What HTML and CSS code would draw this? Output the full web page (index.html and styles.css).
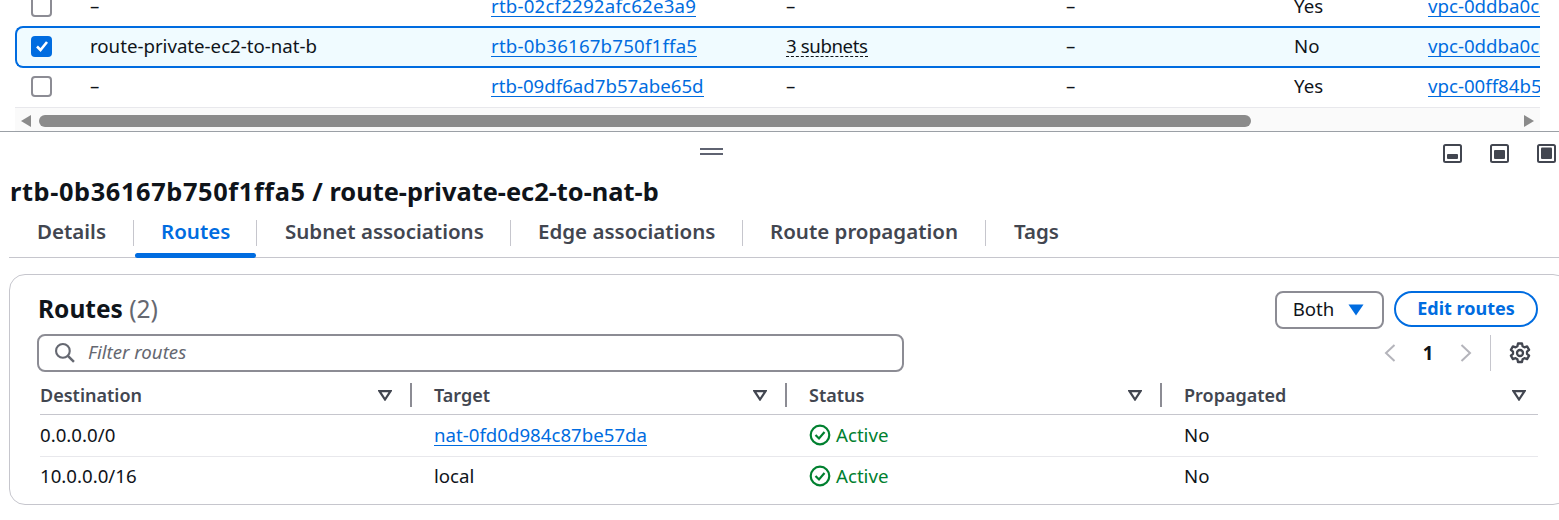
FILE: index.html
```html
<!DOCTYPE html>
<html lang="en">
<head>
    <meta charset="UTF-8">
    <title>Route tables</title>
    <link rel="stylesheet" href="styles.css">
</head>
<body>

    <section class="top-table">
        <div class="top-rows">
            <div class="top-row first">
                <span class="check"></span>
                <span>–</span>
                <span><a class="wide-id" href="#">rtb-02cf2292afc62e3a9</a></span>
                <span>–</span>
                <span>–</span>
                <span>Yes</span>
                <span class="clip"><a href="#">vpc-0ddba0c0e1f2</a></span>
            </div>
            <div class="top-row selected">
                <span class="check on">
                    <svg viewBox="0 0 20 20" width="20" height="20"><path d="M5 10.500 8.500 14 15 6" fill="none" stroke="#fff" stroke-width="2.600"/></svg>
                </span>
                <span>route-private-ec2-to-nat-b</span>
                <span><a class="wide-id" href="#">rtb-0b36167b750f1ffa5</a></span>
                <span><span class="dotted">3 subnets</span></span>
                <span>–</span>
                <span>No</span>
                <span class="clip"><a href="#">vpc-0ddba0c0e1f2</a></span>
            </div>
            <div class="top-row last">
                <span class="check"></span>
                <span>–</span>
                <span><a href="#">rtb-09df6ad7b57abe65d</a></span>
                <span>–</span>
                <span>–</span>
                <span>Yes</span>
                <span class="clip"><a href="#">vpc-00ff84b5c1d2</a></span>
            </div>
        </div>
        <div class="scrollbar">
            <svg class="arrow" viewBox="0 0 10 12" width="10" height="12"><path d="M10 0V12L0 6Z" fill="#8b8b8b"/></svg>
            <div class="thumb"></div>
            <svg class="arrow" viewBox="0 0 10 12" width="10" height="12"><path d="M0 0V12L10 6Z" fill="#8b8b8b"/></svg>
        </div>
    </section>

    <div class="split-bar">
        <div class="handle"></div>
        <div class="panel-icons">
            <svg viewBox="0 0 19 19" width="19" height="19"><rect x="1" y="1" width="17" height="17" rx="1.500" fill="none" stroke="#424650" stroke-width="2"/><rect x="4" y="10" width="11" height="5" rx="1" fill="#424650"/></svg>
            <svg viewBox="0 0 19 19" width="19" height="19"><rect x="1" y="1" width="17" height="17" rx="1.500" fill="none" stroke="#424650" stroke-width="2"/><rect x="4" y="6" width="11" height="9" rx="1" fill="#424650"/></svg>
            <svg viewBox="0 0 19 19" width="19" height="19"><rect x="1" y="1" width="17" height="17" rx="1.500" fill="none" stroke="#424650" stroke-width="2"/><rect x="4" y="3.500" width="11" height="11.500" rx="1" fill="#424650"/></svg>
        </div>
    </div>

    <h1 class="title"><span class="title-id">rtb-0b36167b750f1ffa5</span> / route-private-ec2-to-nat-b</h1>

    <nav class="tabs">
        <a class="tab tab-details" href="#">Details</a>
        <a class="tab tab-routes active" href="#">Routes</a>
        <a class="tab tab-subnet" href="#">Subnet associations</a>
        <a class="tab tab-edge" href="#">Edge associations</a>
        <a class="tab tab-prop" href="#">Route propagation</a>
        <a class="tab tab-tags" href="#">Tags</a>
    </nav>

    <section class="card">
        <div class="card-head">
            <h2 class="card-title">Routes <span class="count">(2)</span></h2>
            <div class="actions">
                <button class="btn-both"><span>Both</span>
                    <svg viewBox="0 0 16 12" width="16" height="12"><path d="M0.500 0.500H15.500L8 11.500Z" fill="#006ce0"/></svg>
                </button>
                <button class="btn-edit">Edit routes</button>
            </div>
        </div>

        <div class="filter-row">
            <div class="filter">
                <svg viewBox="1 1 19 19" width="20" height="20"><circle cx="8.500" cy="8.500" r="6.500" fill="none" stroke="#656871" stroke-width="2"/><path d="M13 13 19 19" stroke="#656871" stroke-width="2.400"/></svg>
                <span>Filter routes</span>
            </div>
            <div class="pager">
                <svg viewBox="0 0 12 20" width="12" height="20"><path d="M10.500 2 2 10l8.500 8" fill="none" stroke="#b4b4bb" stroke-width="2"/></svg>
                <b>1</b>
                <svg viewBox="0 0 12 20" width="12" height="20"><path d="M1.500 2 10 10l-8.500 8" fill="none" stroke="#b4b4bb" stroke-width="2"/></svg>
                <i class="pager-sep"></i>
                <svg class="gear" viewBox="0 0 22 22" width="22" height="22"><path d="M9 1.500h4l.6 2.800 1.800 1 2.700-.9 2 3.400-2.100 1.900v2.100l2.100 1.900-2 3.400-2.700-.9-1.800 1-.6 2.800H9l-.6-2.800-1.800-1-2.700.9-2-3.400 2.100-1.900V9.700L1.900 7.800l2-3.400 2.700.9 1.800-1Z" fill="none" stroke="#424650" stroke-width="2.300" stroke-linejoin="round"/><circle cx="11" cy="11" r="3" fill="none" stroke="#424650" stroke-width="2.300"/></svg>
            </div>
        </div>

        <div class="routes">
            <div class="routes-head">
                <div class="th">Destination<svg viewBox="0 0 14 11" width="14" height="11"><path d="M1.500 1.200H12.500L7 9.500Z" fill="none" stroke="#424650" stroke-width="2.200"/></svg><i></i></div>
                <div class="th">Target<svg viewBox="0 0 14 11" width="14" height="11"><path d="M1.500 1.200H12.500L7 9.500Z" fill="none" stroke="#424650" stroke-width="2.200"/></svg><i></i></div>
                <div class="th">Status<svg viewBox="0 0 14 11" width="14" height="11"><path d="M1.500 1.200H12.500L7 9.500Z" fill="none" stroke="#424650" stroke-width="2.200"/></svg><i></i></div>
                <div class="th last-th">Propagated<svg viewBox="0 0 14 11" width="14" height="11"><path d="M1.500 1.200H12.500L7 9.500Z" fill="none" stroke="#424650" stroke-width="2.200"/></svg></div>
            </div>
            <div class="route">
                <div>0.0.0.0/0</div>
                <div><a href="#">nat-0fd0d984c87be57da</a></div>
                <div class="active-status">
                    <svg viewBox="0 0 22 22" width="22" height="22"><circle cx="11" cy="11" r="9.300" fill="none" stroke="#00802f" stroke-width="2.200"/><path d="M6.500 11 10 14.500 15.500 8" fill="none" stroke="#00802f" stroke-width="2.200"/></svg>
                    Active
                </div>
                <div>No</div>
            </div>
            <div class="route no-line">
                <div>10.0.0.0/16</div>
                <div>local</div>
                <div class="active-status">
                    <svg viewBox="0 0 22 22" width="22" height="22"><circle cx="11" cy="11" r="9.300" fill="none" stroke="#00802f" stroke-width="2.200"/><path d="M6.500 11 10 14.500 15.500 8" fill="none" stroke="#00802f" stroke-width="2.200"/></svg>
                    Active
                </div>
                <div>No</div>
            </div>
        </div>
    </section>

</body>
</html>
```

FILE: styles.css
```css
body {
    margin: 0;
    height: 520px;
    overflow: hidden;
    background-color: #ffffff;
    color: #0f141a;
    font-family: "Noto Sans", sans-serif;
    font-size: 18.67px;
    line-height: 24px;
    font-variant-ligatures: none;
}
a {
    display: inline-block;
    line-height: 21px;
    color: #006ce0;
    text-decoration: none;
    border-bottom: 1px solid #006ce0;
}
.wide-id {
    letter-spacing: 0.2px;
}

/* top table, scrolled so the first row is cut */
.top-table {
    width: 1525px;
    margin-left: 15px;
    height: 131px;
    overflow: hidden;
}
.top-rows {
    height: 108px;
    overflow: hidden;
}
.top-row {
    display: grid;
    grid-template-columns: 75px 401px 295px 280px 228px 134px 112px;
    align-items: center;
    height: 40px;
    white-space: nowrap;
    box-sizing: border-box;
}
.top-row.first {
    margin-top: -14px;
}
.top-row.selected {
    height: 42px;
    background-color: #f0fbff;
    border: 2px solid #006ce0;
    border-right: 0;
    border-radius: 8px 0 0 8px;
    padding-bottom: 2px;
    grid-template-columns: 73px 401px 295px 280px 228px 134px 112px;
}
.top-row.last {
    padding-bottom: 3px;
    border-bottom: 1px solid #e8e8ec;
}
.check {
    display: block;
    width: 17px;
    height: 17px;
    margin-left: 16px;
    border: 2px solid #8c8c94;
    border-radius: 4px;
    background-color: #fff;
}
.top-row.last .check {
    margin-top: 1px;
}
.check.on {
    width: 21px;
    height: 21px;
    margin-left: 14px;
    border: 0;
    background-color: #006ce0;
    display: flex;
    align-items: center;
    justify-content: center;
}
.clip {
    overflow: hidden;
}
.dotted {
    display: inline-block;
    line-height: 21px;
    letter-spacing: -0.4px;
    border-bottom: 1px dashed #0f141a;
}
.scrollbar {
    display: flex;
    align-items: center;
    gap: 8px;
    height: 23px;
    box-sizing: border-box;
    padding: 3px 5px 0 6px;
    background-color: #fafafa;
}
.thumb {
    width: 1212px;
    height: 12px;
    border-radius: 6px;
    background-color: #8b8b8b;
    margin-right: 265px;
}

/* splitter */
.split-bar {
    position: relative;
    height: 40px;
    border-top: 1px solid #9ba0a6;
}
.handle {
    position: absolute;
    left: 700px;
    top: 16px;
    width: 23px;
    height: 3px;
    border-top: 2px solid #5f6371;
    border-bottom: 2px solid #5f6371;
}
.panel-icons {
    position: absolute;
    right: 3px;
    top: 12px;
    display: flex;
    gap: 28px;
}

.title {
    margin: 3px 0 0 10px;
    font-size: 25.4px;
    line-height: 32px;
    font-weight: 700;
}
.title-id {
    letter-spacing: 0.6px;
}

/* tabs */
.tabs {
    display: flex;
    margin: 7px 0 0 9px;
    height: 43px;
    border-bottom: 1px solid #c6c6cd;
    position: relative;
}
.tab {
    border: 0;
    height: 43px;
    box-sizing: border-box;
    padding: 3px 0 0 29px;
    font-size: 20.5px;
    line-height: 28px;
    font-weight: 600;
    color: #424650;
    position: relative;
    white-space: nowrap;
}
.tab + .tab::before {
    content: "";
    position: absolute;
    left: 0;
    top: 6px;
    height: 26px;
    width: 1px;
    background-color: #c6c6cd;
}
.tab-details { width: 124px; padding-left: 28px; }
.tab-routes { width: 123px; padding-left: 28px; }
.tab-subnet { width: 254px; }
.tab-edge { width: 232px; padding-left: 28px; }
.tab-prop { width: 243px; padding-left: 28px; }
.tab.active {
    color: #006ce0;
}
.tab.active::after {
    content: "";
    position: absolute;
    left: 2px;
    right: 0;
    bottom: -1px;
    height: 5px;
    border-radius: 3px;
    background-color: #006ce0;
}

/* routes card */
.card {
    margin: 16px -10px 0 9px;
    height: 231px;
    box-sizing: border-box;
    border: 1px solid #c6c6cd;
    border-radius: 16px;
    padding: 16px 30px 0 27px;
}
.card-head {
    display: flex;
    justify-content: space-between;
    height: 43px;
}
.card-title {
    margin: 2px 0 0 1px;
    font-size: 24.5px;
    line-height: 32px;
    font-weight: 700;
}
.count {
    font-weight: 400;
    color: #656871;
}
.actions {
    display: flex;
    gap: 10px;
}
button {
    font-family: "Noto Sans", sans-serif;
    font-size: 18.67px;
    background-color: #fff;
    height: 38px;
    padding: 0;
}
.btn-both {
    width: 109px;
    border: 2px solid #8c8c94;
    border-radius: 8px;
    color: #0f141a;
    display: flex;
    align-items: center;
    justify-content: center;
    gap: 14px;
    padding-right: 2px;
}
.btn-both span {
    margin-bottom: 3px;
}
.btn-edit {
    width: 144px;
    height: 36px;
    border: 2px solid #006ce0;
    border-radius: 18px;
    color: #006ce0;
    padding-bottom: 2px;
    font-size: 18px;
    font-weight: 700;
}
.filter-row {
    display: flex;
    justify-content: space-between;
    align-items: center;
    height: 38px;
}
.filter {
    width: 867px;
    height: 38px;
    box-sizing: border-box;
    border: 2px solid #8c8c94;
    border-radius: 8px;
    display: flex;
    align-items: center;
    gap: 13px;
    padding-left: 16px;
    font-style: italic;
    color: #656871;
}
.filter span {
    margin-bottom: 2px;
}
.pager {
    display: flex;
    align-items: center;
    width: 154px;
}
.pager b {
    width: 22px;
    margin: 0 21px;
    text-align: center;
}
.pager-sep {
    width: 1px;
    height: 36px;
    background-color: #c6c6cd;
    margin: 0 18px;
}
.routes {
    margin: 4px 0 0 3px;
}
.routes-head, .route {
    display: grid;
    grid-template-columns: 394px 375px 375px 354px;
}
.routes-head {
    height: 38px;
    border-bottom: 1px solid #c6c6cd;
    align-items: center;
    font-size: 18px;
    font-weight: 600;
    color: #424650;
}
.th {
    display: flex;
    align-items: center;
    justify-content: space-between;
    position: relative;
    padding-right: 42px;
}
.th i {
    position: absolute;
    right: 22px;
    top: 0;
    width: 2px;
    height: 24px;
    background-color: #8c8c94;
}
.last-th {
    padding-right: 12px;
}
.route {
    height: 42px;
    box-sizing: border-box;
    padding-bottom: 2px;
    align-items: center;
    border-bottom: 1px solid #e8e8ec;
}
.no-line {
    height: 40px;
    border-bottom: 0;
}
.active-status {
    display: flex;
    align-items: center;
    gap: 5px;
    color: #00802f;
}
```
